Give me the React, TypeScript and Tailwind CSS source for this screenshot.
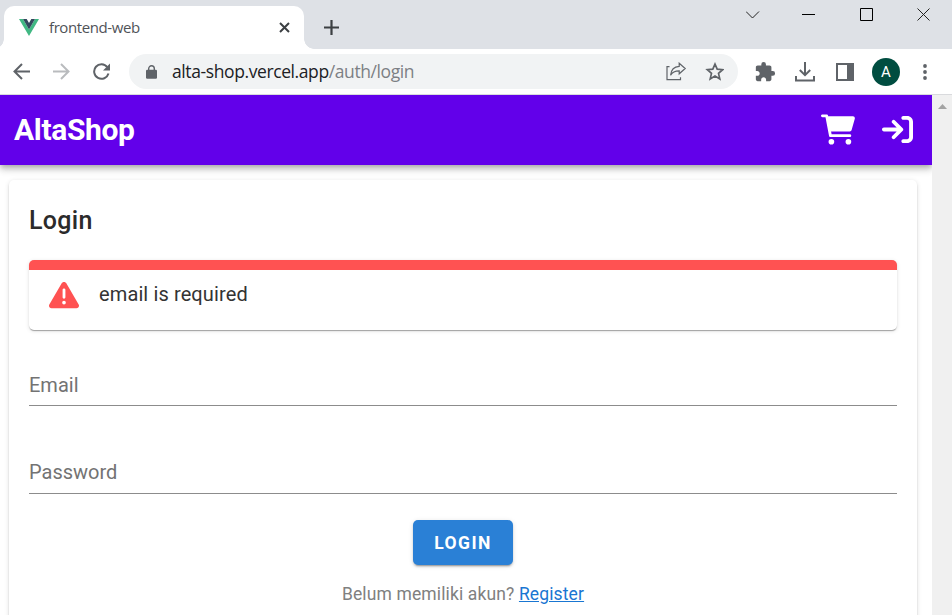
import React from "react";
import { FaArrowRightToBracket } from "react-icons/fa6";
import { MdExtension } from "react-icons/md";

function TabStrip() {
  return (
    <div className="flex h-[49px] shrink-0 bg-[#dee1e6] pl-1">
      <div className="relative mt-1.5 flex h-[43px] w-[300px] items-center rounded-t-[10px] bg-white">
        <div className="absolute bottom-0 -left-[10px] size-[10px] bg-[radial-gradient(circle_at_0_0,transparent_9.5px,white_10px)]" />
        <div className="absolute -right-[10px] bottom-0 size-[10px] bg-[radial-gradient(circle_at_100%_0,transparent_9.5px,white_10px)]" />
        <svg className="ml-[15px] h-[17px] w-5" viewBox="0 0 20 17">
          <path d="M0 0h4l6 10.4L16 0h4L10 17z" fill="#41b883" />
          <path d="M4 0h3.7L10 4l2.3-4H16l-6 10.4z" fill="#34495e" />
        </svg>
        <span className="ml-[10px] text-[15px] tracking-[-0.41px] text-[#505358]">frontend-web</span>
        <svg className="mr-[14px] ml-auto size-[11px]" viewBox="0 0 11 11" stroke="#3c4043" strokeWidth="2">
          <path d="M1 1l9 9M10 1l-9 9" />
        </svg>
      </div>
      <svg className="mt-5 ml-5 size-[15px]" viewBox="0 0 15 15" stroke="#3c4043" strokeWidth="2.2">
        <path d="M7.5 0v15M0 7.5h15" />
      </svg>
      <svg className="mr-[22px] ml-auto h-[30px] w-[184px]" viewBox="0 0 184 30" fill="none" stroke="#222">
        <path d="M0 11.5l6.5 6.5 6.5-6.5" />
        <path d="M56 14.5h13" stroke="#000" />
        <path d="M114.500 8.500h12v12h-12z" stroke="#000" />
        <path d="M171.500 8.500l12 12M183.500 8.500l-12 12" />
      </svg>
    </div>
  );
}

function Toolbar() {
  return (
    <div className="flex h-[46px] shrink-0 items-center border-b border-[#d9dadd] bg-white pl-[13px]">
      <svg className="h-[17px] w-[98px]" viewBox="0 0 98 17" fill="none" stroke="#5f6368" strokeWidth="2">
        <path d="M17 8.500H1.500M9 1L1.500 8.500 9 16" />
        <path d="M40 8.500h15.500M48 1l7.500 7.500L48 16" stroke="#b9bbbe" />
        <path d="M94.300 4.100A7.300 7.300 0 1 0 95.500 10.500" />
        <path d="M97 .5v7h-7z" fill="#5f6368" stroke="none" />
      </svg>
      <div className="ml-[18px] flex h-[35px] w-[609px] items-center rounded-full bg-[#f1f3f4]">
        <svg className="ml-[17px] h-[14px] w-[11px]" viewBox="0 0 11 14">
          <path d="M2.700 6V3.600a2.800 2.800 0 0 1 5.600 0V6" fill="none" stroke="#5f6368" strokeWidth="1.4" />
          <rect y="4.800" width="11" height="9" rx="1.200" fill="#5f6368" />
        </svg>
        <span className="ml-[15px] text-[17.5px] tracking-[-0.4px] text-[#202124]">
          alta-shop.vercel.app<span className="text-[#7c8084]">/auth/login</span>
        </span>
        <svg className="mr-[14px] ml-auto h-[19px] w-[58px]" viewBox="0 0 58 19" fill="none" stroke="#5f6368" strokeWidth="1.2">
          <path d="M3.500 4.700H1v13h13.500v-2.500" />
          <path d="M13.200 1.200l6 5.300-6 5.300V8.900c-4 0-6.800 1-8.600 4.300.5-5 3.600-8.500 8.600-8.800z" />
          <path d="M49 2.100l2.200 5.100 5.500.5-4.200 3.700 1.300 5.500L49 14l-4.800 2.900 1.300-5.500-4.200-3.700 5.500-.5z" strokeWidth="1.7" />
        </svg>
      </div>
      <MdExtension className="ml-4 size-[22px] text-[#5f6368]" />
      <svg className="ml-[19px] size-5" viewBox="0 0 20 20" fill="none" stroke="#5f6368" strokeWidth="2">
        <path d="M10 0v13M4.800 8l5.200 5.200L15.200 8M1 14v4.500h18v-4.500" />
      </svg>
      <svg className="ml-[21px] size-[18px]" viewBox="0 0 18 18">
        <path d="M0 0h18v18H0zM2 2v14h9V2z" fill="#5f6368" fillRule="evenodd" />
      </svg>
      <div className="ml-[18px] flex size-7 items-center justify-center rounded-full bg-[#004d40] pt-0.5 font-['Roboto'] text-[15px] text-white">A</div>
      <svg className="ml-[23px] h-4 w-1" viewBox="0 0 4 16" fill="#5f6368">
        <circle cx="2" cy="2" r="1.900" />
        <circle cx="2" cy="8" r="1.900" />
        <circle cx="2" cy="14" r="1.900" />
      </svg>
    </div>
  );
}

function CartIcon() {
  return (
    <svg className="-mt-px ml-auto h-[31px] w-[34px]" viewBox="0 0 576 512" fill="currentColor">
      <path d="M96 0c11.500 0 21.400 8.200 23.600 19.500L121.100 32H541.800c20.300 0 36.500 20.300 30.800 40.700l-54 192c-3.900 13.800-16.500 23.300-30.800 23.300H170.700l9.200 48H488c13.300 0 24 10.700 24 24s-10.700 24-24 24H159.100c-10.600 0-20.500-8.200-22.700-19.500L76.100 48H24C10.700 48 0 37.300 0 24S10.700 0 24 0z" />
      <circle cx="176" cy="464" r="48" />
      <circle cx="464" cy="464" r="48" />
    </svg>
  );
}

function WarningIcon() {
  return (
    <svg className="mt-[10px] size-[30px]" viewBox="0 0 512 512" fill="#ff5252">
      <path d="M506.300 417L293 53c-16.300-28-57.500-28-74 0L5.800 417c-16.400 27.900 4 63 36.900 63h426.600c32.800 0 53.300-35 37-63zM232 168c0-13.300 10.700-24 24-24s24 10.700 24 24v128c0 13.300-10.700 24-24 24s-24-10.700-24-24zM256 416a31.400 31.400 0 1 1 0-62.900 31.400 31.400 0 0 1 0 62.900z" />
    </svg>
  );
}

function Field({ label, offset }: { label: string; offset: string }) {
  return (
    <div className={"flex h-[42px] items-start border-b border-[#8c8c8c] text-[20px] text-[#737373] " + offset}>
      {label}
    </div>
  );
}

export default function App() {
  return (
    <div className="flex h-[615px] w-[952px] flex-col overflow-hidden bg-white font-['Open_Sans',sans-serif]">
      <TabStrip />
      <Toolbar />
      <div className="flex min-h-0 flex-1 font-['Roboto',sans-serif]">
        <main className="flex w-[932px] flex-col overflow-hidden">
          <header className="flex h-[70px] shrink-0 items-center bg-[#6200ea] pl-3.5 text-white shadow-[0_2px_5px_-1px_rgba(0,0,0,.2),0_5px_6px_rgba(0,0,0,.14),0_1px_12px_rgba(0,0,0,.12)]">
            <h1 className="-mt-0.5 text-[30px] font-bold tracking-[-0.35px]">AltaShop</h1>
            <CartIcon />
            <FaArrowRightToBracket className="-mt-px mr-[19px] ml-[27px] size-[31px]" />
          </header>
          <section className="mt-[15px] mr-[15px] ml-[9px] flex h-[520px] shrink-0 flex-col rounded-[5px] bg-white px-5 shadow-[0_3px_1px_-2px_rgba(0,0,0,.2),0_2px_2px_rgba(0,0,0,.14),0_1px_5px_rgba(0,0,0,.12)]">
            <h2 className="mt-[21px] text-[25px] leading-10 font-medium tracking-[0.3px] text-[#2b2b2b]">Login</h2>
            <div className="mt-[19px] flex h-[70px] shrink-0 rounded-[5px] border-t-[10px] border-[#ff5252] bg-white pl-5 shadow-[0_2px_1px_-1px_rgba(0,0,0,.2),0_1px_1px_rgba(0,0,0,.14),0_1px_4px_rgba(0,0,0,.12)]">
              <WarningIcon />
              <span className="ml-5 pt-[9px] text-[20px] leading-[30px] tracking-[0.12px] text-[#333]">email is required</span>
            </div>
            <div className="mt-[34px]"><Field label="Email" offset="leading-[42px]" /></div>
            <div className="mt-[46px]"><Field label="Password" offset="leading-[40px]" /></div>
            <button className="mt-[26px] h-[45px] w-[100px] shrink-0 self-center rounded-[5px] bg-[#2a80d6] pt-0.5 text-[17.5px] font-bold tracking-[1.4px] text-white shadow-[0_3px_1px_-2px_rgba(0,0,0,.2),0_2px_2px_rgba(0,0,0,.14),0_1px_5px_rgba(0,0,0,.12)]">LOGIN</button>
            <p className="mt-[15px] text-center text-[17.5px] leading-[29px] tracking-[0.13px] text-[#808080]">
              Belum memiliki akun? <a className="text-[#1976d2] underline">Register</a>
            </p>
          </section>
        </main>
        <div className="flex w-5 justify-center bg-[#f0f0f0]">
          <svg className="mt-[9px] h-[5px] w-[9px]" viewBox="0 0 9 5"><path d="M4.500 0L9 5H0z" fill="#a3a3a3" /></svg>
        </div>
      </div>
    </div>
  );
}
